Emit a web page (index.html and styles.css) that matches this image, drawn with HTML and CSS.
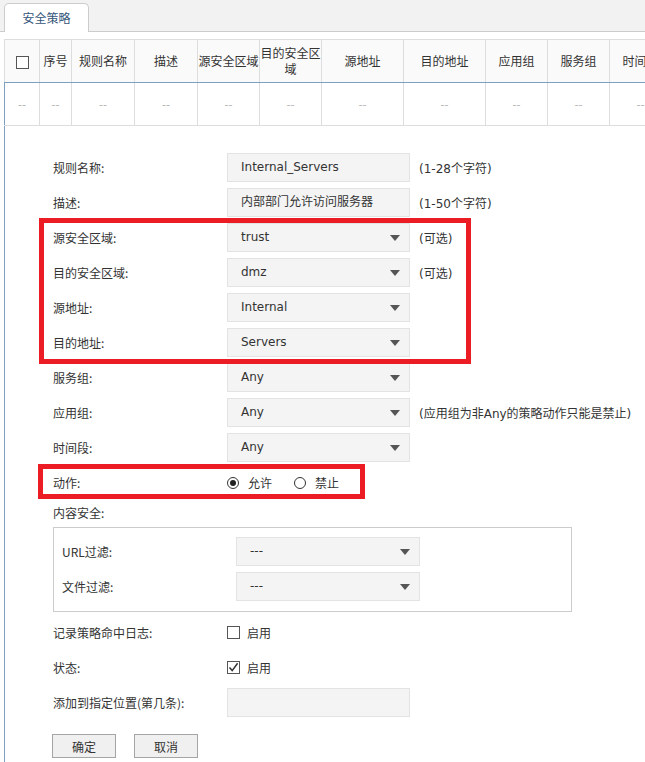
FILE: index.html
```html
<!DOCTYPE html>
<html lang="zh-CN">
<head>
<meta charset="utf-8">
<title>安全策略</title>
<link rel="stylesheet" href="styles.css">
</head>
<body>
<div class="page">
  <div class="tabbar">
    <div class="tab">安全策略</div>
  </div>

  <table class="grid">
    <colgroup>
      <col class="c-chk"><col class="c-no"><col class="c-m"><col class="c-m">
      <col class="c-s"><col class="c-s"><col class="c-l"><col class="c-l">
      <col class="c-s"><col class="c-s"><col class="c-s"><col class="c-s"><col class="c-s">
    </colgroup>
    <thead>
      <tr>
        <th><span class="hchk"></span></th>
        <th>序号</th>
        <th>规则名称</th>
        <th>描述</th>
        <th>源安全区域</th>
        <th>目的安全区域</th>
        <th>源地址</th>
        <th>目的地址</th>
        <th>应用组</th>
        <th>服务组</th>
        <th>时间段</th>
        <th>动作</th>
        <th>状态</th>
      </tr>
    </thead>
    <tbody>
      <tr>
        <td>--</td><td>--</td><td>--</td><td>--</td><td>--</td><td>--</td><td>--</td>
        <td>--</td><td>--</td><td>--</td><td>--</td><td>--</td><td>--</td>
      </tr>
    </tbody>
  </table>

  <div class="panel">
    <div class="row">
      <div class="label">规则名称:</div>
      <div class="field">Internal_Servers</div>
      <div class="hint">(1-28个字符)</div>
    </div>
    <div class="row">
      <div class="label">描述:</div>
      <div class="field">内部部门允许访问服务器</div>
      <div class="hint">(1-50个字符)</div>
    </div>
    <div class="row">
      <div class="label">源安全区域:</div>
      <div class="field select"><span>trust</span><i class="arrow"></i></div>
      <div class="hint">(可选)</div>
    </div>
    <div class="row">
      <div class="label">目的安全区域:</div>
      <div class="field select"><span>dmz</span><i class="arrow"></i></div>
      <div class="hint">(可选)</div>
    </div>
    <div class="row">
      <div class="label">源地址:</div>
      <div class="field select"><span>Internal</span><i class="arrow"></i></div>
    </div>
    <div class="row">
      <div class="label">目的地址:</div>
      <div class="field select"><span>Servers</span><i class="arrow"></i></div>
    </div>
    <div class="row">
      <div class="label">服务组:</div>
      <div class="field select"><span>Any</span><i class="arrow"></i></div>
    </div>
    <div class="row">
      <div class="label">应用组:</div>
      <div class="field select"><span>Any</span><i class="arrow"></i></div>
      <div class="hint">(应用组为非Any的策略动作只能是禁止)</div>
    </div>
    <div class="row">
      <div class="label">时间段:</div>
      <div class="field select"><span>Any</span><i class="arrow"></i></div>
    </div>
    <div class="row">
      <div class="label">动作:</div>
      <label class="opt"><span class="radio on"></span>允许</label>
      <label class="opt opt2"><span class="radio"></span>禁止</label>
    </div>
    <div class="section-label">内容安全:</div>
    <div class="subbox">
      <div class="row">
        <div class="label">URL过滤:</div>
        <div class="field select wide"><span>---</span><i class="arrow"></i></div>
      </div>
      <div class="row last">
        <div class="label">文件过滤:</div>
        <div class="field select wide"><span>---</span><i class="arrow"></i></div>
      </div>
    </div>
    <div class="row after-box">
      <div class="label">记录策略命中日志:</div>
      <label class="opt"><span class="check"></span>启用</label>
    </div>
    <div class="row">
      <div class="label">状态:</div>
      <label class="opt"><span class="check">
        <svg width="11" height="11" viewBox="0 0 11 11"><path d="M1.5 5.5 L4.2 8.6 L9.6 1.2" fill="none" stroke="#333" stroke-width="1.5"/></svg>
      </span>启用</label>
    </div>
    <div class="row last">
      <div class="label">添加到指定位置(第几条):</div>
      <div class="field"></div>
    </div>
    <div class="buttons">
      <button class="btn">确定</button>
      <button class="btn">取消</button>
    </div>
  </div>

  <div class="mark mark1"></div>
  <div class="mark mark2"></div>
</div>
</body>
</html>
```

FILE: styles.css
```css
html, body {
  margin: 0;
  padding: 0;
  background: #ffffff;
}
body {
  overflow: hidden;
  font-family: "DejaVu Sans", "Noto Sans CJK SC", sans-serif;
  font-size: 12px;
  color: #333333;
}
.page {
  position: relative;
  width: 645px;
  height: 762px;
  overflow: hidden;
}

/* tab bar */
.tabbar {
  height: 28px;
  padding: 3px 0 0 4px;
  background: #f2f2f2;
  border-bottom: 1px solid #cccccc;
  display: flex;
}
.tab {
  width: 83px;
  height: 28px;
  background: #ffffff;
  border: 1px solid #cccccc;
  border-bottom: none;
  border-radius: 5px 5px 0 0;
  line-height: 28px;
  text-align: center;
  color: #34557a;
  font-family: "Noto Sans CJK SC", sans-serif;
}

/* table */
.grid {
  margin: 7px 0 0 4px;
  border-collapse: collapse;
  table-layout: fixed;
  width: 791px;
}
.c-chk { width: 35px; }
.c-no { width: 32px; }
.c-m { width: 63px; }
.c-s { width: 62px; }
.c-l { width: 82px; }
.grid th, .grid td {
  border: 1px solid #dddddd;
  padding: 0;
  text-align: center;
  vertical-align: middle;
  font-weight: normal;
  font-family: "Noto Sans CJK SC", sans-serif;
}
.grid th {
  height: 42px;
  background: #fafafa;
  color: #333333;
  line-height: 16px;
  border-bottom: 1px solid #7d9fc0;
}
.grid td {
  height: 42px;
  color: #b4b4b4;
  font-family: "DejaVu Sans", sans-serif;
  font-size: 11px;
}
.grid td:first-child {
  border-left-color: #7d9fc0;
}
.hchk {
  display: inline-block;
  width: 11px;
  height: 11px;
  border: 1px solid #555555;
  background: #ffffff;
  vertical-align: middle;
}

/* form panel */
.panel {
  margin-left: 4px;
  border-left: 1px solid #7d9fc0;
  padding: 27px 0 10px 48px;
}
.row {
  display: flex;
  align-items: center;
  height: 29px;
  margin-bottom: 6px;
}
.row.last {
  margin-bottom: 0;
}
.label {
  width: 174px;
  flex: none;
  font-family: "Noto Sans CJK SC", sans-serif;
}
.field {
  box-sizing: border-box;
  width: 183px;
  height: 29px;
  flex: none;
  background: #f4f4f4;
  border: 1px solid #e3e3e3;
  padding: 0 9px 0 13px;
  line-height: 27px;
  color: #333333;
  white-space: nowrap;
  overflow: hidden;
}
.field.select {
  display: flex;
  align-items: center;
  justify-content: space-between;
}
.field.wide {
  width: 184px;
}
.arrow {
  display: block;
  width: 0;
  height: 0;
  border-left: 5px solid transparent;
  border-right: 5px solid transparent;
  border-top: 6px solid #555555;
}
.hint {
  margin-left: 9px;
  white-space: nowrap;
}

/* radio / checkbox */
.opt {
  display: flex;
  align-items: center;
  font-family: "Noto Sans CJK SC", sans-serif;
}
.opt2 {
  margin-left: 22px;
}
.radio {
  box-sizing: border-box;
  width: 12px;
  height: 12px;
  border: 1px solid #333333;
  border-radius: 50%;
  margin-right: 9px;
  display: flex;
  align-items: center;
  justify-content: center;
  background: #ffffff;
}
.radio.on::after {
  content: "";
  width: 6px;
  height: 6px;
  border-radius: 50%;
  background: #222222;
}
.check {
  box-sizing: border-box;
  width: 13px;
  height: 13px;
  border: 1px solid #555555;
  margin-right: 7px;
  display: flex;
  align-items: center;
  justify-content: center;
  background: #ffffff;
}

/* content security sub box */
.section-label {
  height: 20px;
  line-height: 20px;
  margin-bottom: 4px;
  font-family: "Noto Sans CJK SC", sans-serif;
}
.subbox {
  width: 509px;
  border: 1px solid #cccccc;
  padding: 9px 0 10px 8px;
}
.after-box {
  margin-top: 6px;
}

/* buttons */
.buttons {
  display: flex;
  gap: 18px;
  margin-top: 17px;
  margin-left: -1px;
}
.btn {
  width: 64px;
  height: 24px;
  border: 1px solid #a5a5a5;
  background: #f0f0f0;
  font-family: "Noto Sans CJK SC", sans-serif;
  font-size: 12px;
  color: #333333;
  padding: 0;
  border-radius: 0;
}

/* red annotation boxes */
.mark {
  position: absolute;
  box-sizing: border-box;
  border: 5px solid #ec1c24;
  pointer-events: none;
}
.mark1 {
  left: 39px;
  top: 218px;
  width: 432px;
  height: 146px;
}
.mark2 {
  left: 38px;
  top: 464px;
  width: 327px;
  height: 35px;
}
```
